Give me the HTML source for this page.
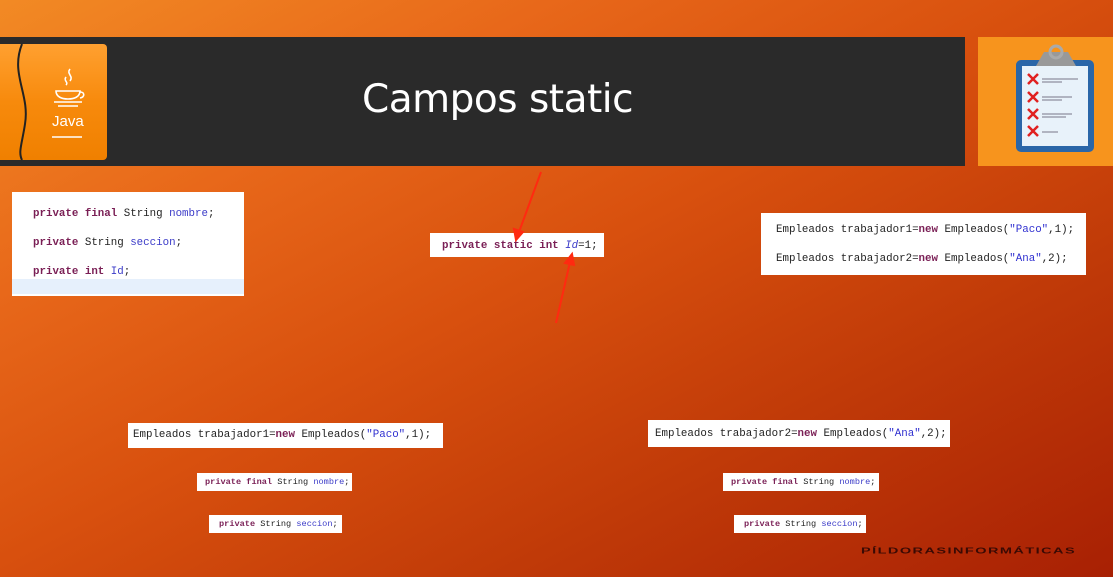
<!DOCTYPE html>
<html><head><meta charset="utf-8"><style>
*{margin:0;padding:0;box-sizing:border-box}
body{width:1113px;height:577px;overflow:hidden;position:relative;font-family:"Liberation Sans",sans-serif;
background:linear-gradient(152deg,#f28a24 0%,#e8681a 25%,#d8500e 48%,#c03a08 72%,#a82004 100%)}
.box{position:absolute;background:#fff;font-family:"Liberation Mono",monospace;color:#222;white-space:pre}
.k{color:#7a1f55;font-weight:bold}.v{color:#3b3bc8}.s{color:#3030d0}
.l{position:absolute;left:21px}
</style></head><body>
<div style="position:absolute;left:0;top:37px;width:965px;height:129px;background:#2a2a2a"></div>
<div style="position:absolute;left:0;top:44px;width:107px;height:116px;border-radius:0 4px 4px 0;background:linear-gradient(180deg,#ffa030,#f78a0c 50%,#f08000)"></div>
<svg style="position:absolute;left:0;top:44px" width="107" height="116"><path d="M22 0 C10 30,30 50,25 80 C22 100,18 108,22 116" stroke="#222" stroke-width="2" fill="none"/>
<g stroke="#fff" fill="none" stroke-width="1.6"><path d="M70 25c-4 5 4 7 0 12M66 33c-3 4 3 5 0 8"/><path d="M56 47h24c0 6-6 8-12 8s-12-2-12-8zM54 58h28M58 62h20"/><path d="M80 48c5 0 5 5 0 6"/></g>
<text x="52" y="82" fill="#fff" font-size="15" font-family="Liberation Sans">Java</text><path d="M52 93h30" stroke="#fff" stroke-width="1.5"/></svg>
<div style="position:absolute;left:362px;top:73px;color:#fff;font-size:39px;line-height:54px;font-family:'DejaVu Sans',sans-serif;letter-spacing:-0.5px">Campos static</div>
<div style="position:absolute;left:978px;top:37px;width:135px;height:129px;background:#f7941d"></div>
<svg style="position:absolute;left:1014px;top:42px" width="84" height="112"><rect x="2" y="18" width="78" height="92" rx="5" fill="#2a66a8"/><rect x="8" y="24" width="66" height="80" fill="#e8f2fa"/><path d="M22 24l8-14h24l8 14z" fill="#999"/><circle cx="42" cy="10" r="6" fill="none" stroke="#aaa" stroke-width="3"/>
<g stroke="#e02020" stroke-width="2.5"><path d="M14 32l10 10M24 32l-10 10M14 50l10 10M24 50l-10 10M14 67l10 10M24 67l-10 10M14 84l10 10M24 84l-10 10"/></g>
<g stroke="#778" stroke-width="1"><path d="M28 37h36M28 40h20M28 55h30M28 58h20M28 72h30M28 75h24M28 90h16"/></g></svg>
<div class="box" style="left:12px;top:192px;width:232px;height:104px;font-size:10.8px">
<div class="l" style="top:16px"><span class="k">private</span> <span class="k">final</span> String <span class="v">nombre</span>;</div>
<div class="l" style="top:45px"><span class="k">private</span> String <span class="v">seccion</span>;</div>
<div class="l" style="top:74px"><span class="k">private</span> <span class="k">int</span> <span class="v">Id</span>;</div>
<div style="position:absolute;left:0;top:87px;width:232px;height:15px;background:#e6f0fc"></div></div>
<div class="box" style="left:430px;top:233px;width:174px;height:24px;font-size:10.8px;padding:7px 0 0 12px"><span class="k">private</span> <span class="k">static</span> <span class="k">int</span> <i class="v">Id</i>=1;</div>
<div class="box" style="left:761px;top:213px;width:325px;height:62px;font-size:10.8px">
<div class="l" style="left:15px;top:11px">Empleados trabajador1=<span class="k">new</span> Empleados(<span class="s">"Paco"</span>,1);</div>
<div class="l" style="left:15px;top:40px">Empleados trabajador2=<span class="k">new</span> Empleados(<span class="s">"Ana"</span>,2);</div></div>
<div class="box" style="left:128px;top:423px;width:315px;height:25px;font-size:10.8px;padding:6px 0 0 5px">Empleados trabajador1=<span class="k">new</span> Empleados(<span class="s">"Paco"</span>,1);</div>
<div class="box" style="left:648px;top:420px;width:302px;height:27px;font-size:10.8px;padding:8px 0 0 7px">Empleados trabajador2=<span class="k">new</span> Empleados(<span class="s">"Ana"</span>,2);</div>
<div class="box" style="left:197px;top:473px;width:155px;height:18px;font-size:8.6px;padding:4px 0 0 8px"><span class="k">private</span> <span class="k">final</span> String <span class="v">nombre</span>;</div>
<div class="box" style="left:209px;top:515px;width:133px;height:18px;font-size:8.6px;padding:4px 0 0 10px"><span class="k">private</span> String <span class="v">seccion</span>;</div>
<div class="box" style="left:723px;top:473px;width:156px;height:18px;font-size:8.6px;padding:4px 0 0 8px"><span class="k">private</span> <span class="k">final</span> String <span class="v">nombre</span>;</div>
<div class="box" style="left:734px;top:515px;width:132px;height:18px;font-size:8.6px;padding:4px 0 0 10px"><span class="k">private</span> String <span class="v">seccion</span>;</div>
<svg style="position:absolute;left:0;top:0" width="1113" height="577"><g stroke="#ff2a10" stroke-width="2" fill="#ff2a10">
<path d="M541 172L519 232"/><path d="M516 240l-2-11 9 3z"/><path d="M556 323L570 262"/><path d="M572 254l2 11-9-2z"/></g></svg>
<div style="position:absolute;left:861px;top:547px;font-size:10px;letter-spacing:1px;color:#3a0a04;font-weight:bold;transform-origin:0 0;transform:scale(1.45,.8)">PÍLDORASINFORMÁTICAS</div>
</body></html>
